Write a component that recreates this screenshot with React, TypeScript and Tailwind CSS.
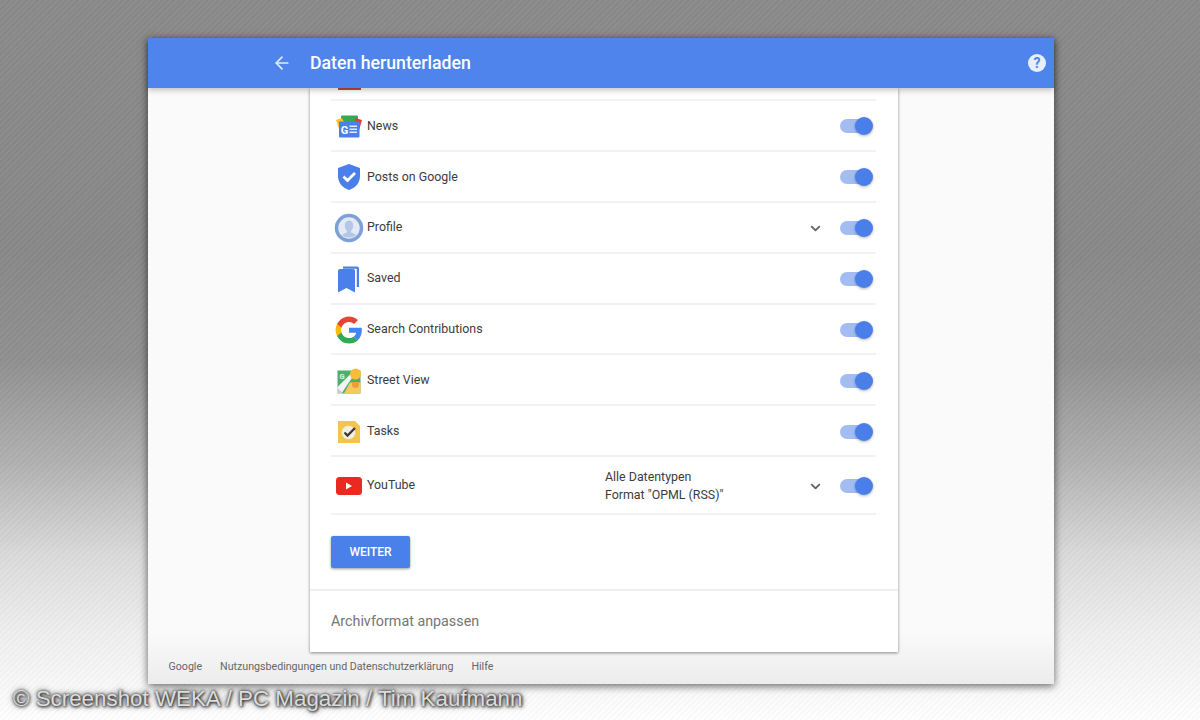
import { ArrowLeft, ChevronDown } from "lucide-react";
import type { ReactNode } from "react";

function RedStub() {
  return <div className="h-[2px] w-[23px] bg-[#c5453f]" />;
}

function NewsIcon() {
  return (
    <svg width="26" height="23" viewBox="0 0 26 23">
      <path d="M6 0.500h15a1 1 0 0 1 1 1V7H5V1.500a1 1 0 0 1 1-1z" fill="#34a853" />
      <path d="M0 5l6-2 3.500 7-6 5z" fill="#fbc02d" />
      <path d="M19.500 3l6.500 2-3 10.500-6-4z" fill="#d9423a" />
      <rect x="3" y="6.500" width="20.500" height="16" rx="1" fill="#4a80ea" />
      <text x="4.700" y="18.500" fontFamily="Roboto, sans-serif" fontWeight="700" fontSize="11" fill="#fff">
        G
      </text>
      <path d="M13.500 10.500h7.500v1.600h-7.500zM13.500 13.500h7.500v1.600h-7.500zM13.500 16.500h7.500v1.600h-7.500z" fill="#dfe9fc" />
    </svg>
  );
}

function ShieldIcon() {
  return (
    <svg width="24" height="28" viewBox="0 0 24 28">
      <path d="M12 1 23 5v8c0 7-4.700 12-11 14C5.700 25 1 20 1 13V5z" fill="#4a80ea" />
      <path d="M6.500 13.500l4 4 7.500-7.500" fill="none" stroke="#fff" strokeWidth="2.800" />
    </svg>
  );
}

function ProfileIcon() {
  return (
    <svg width="30" height="30" viewBox="0 0 30 30">
      <circle cx="15" cy="15" r="12.500" fill="#e4eaf4" stroke="#7ea0d8" strokeWidth="3.500" />
      <path
        d="M15 7.500c2.800 0 4.200 2.200 4.200 5 0 2.200-.9 4-2 5.100v2c2 .8 3.800 1.400 5 2.600A12 12 0 0 1 7.800 22.200c1.200-1.200 3-1.800 5-2.600v-2c-1.100-1.100-2-2.900-2-5.100 0-2.800 1.400-5 4.200-5z"
        fill="#b3c7e6"
      />
    </svg>
  );
}

function SavedIcon() {
  return (
    <svg width="24" height="27" viewBox="0 0 24 27">
      <path d="M6 0.500h14a2 2 0 0 1 2 2V21h-2.200V2.800H6z" fill="#4a80ea" />
      <path d="M1 5a2 2 0 0 1 2-2h13a2 2 0 0 1 2 2v21.500l-8.500-4.500L1 26.500z" fill="#4a80ea" />
    </svg>
  );
}

function GoogleIcon() {
  return (
    <svg width="28" height="28" viewBox="0 0 48 48">
      <path fill="#4285f4" d="M46 24.500c0-1.600-.1-3.100-.4-4.500H24v8.700h12.400a10.600 10.600 0 0 1-4.600 7l7.400 5.700C43.500 37.400 46 31.500 46 24.500z" />
      <path fill="#34a853" d="M24 47c6.200 0 11.400-2 15.200-5.600l-7.400-5.700c-2 1.400-4.700 2.200-7.800 2.200-6 0-11-4-12.800-9.500H3.500v5.900A23 23 0 0 0 24 47z" />
      <path fill="#fbbc05" d="M11.200 28.400a13.800 13.800 0 0 1 0-8.800v-5.900H3.500a23 23 0 0 0 0 20.600z" />
      <path fill="#ea4335" d="M24 10.100c3.400 0 6.400 1.200 8.800 3.400l6.600-6.600A23 23 0 0 0 3.500 13.700l7.700 5.900C13 14.100 18 10.100 24 10.100z" />
    </svg>
  );
}

function StreetViewIcon() {
  return (
    <svg width="26" height="26" viewBox="0 0 26 26">
      <rect x="1.500" y="2.500" width="23" height="23" fill="#4caf6a" />
      <path d="M1.500 19 18 2.500h3L5.500 25.500h-4z" fill="#f2f2f2" />
      <path d="M1.500 25.500V20l6 5.500z" fill="#c9ccd0" />
      <path d="M14 14.500h10.500v11H8z" fill="#f5c95f" />
      <text x="3.500" y="10.500" fontFamily="Roboto, sans-serif" fontWeight="700" fontSize="7.500" fill="#e9f6ec">
        G
      </text>
      <circle cx="19.500" cy="6" r="5.500" fill="#f9bd3a" />
      <path d="M16 14h7v2.500a3.500 3.500 0 0 1-7 0z" fill="#ef9d37" />
    </svg>
  );
}

function TasksIcon() {
  return (
    <svg width="24" height="24" viewBox="0 0 24 24">
      <path d="M1 1h17l5 5v17H1z" fill="#f4c451" />
      <circle cx="11.500" cy="12.500" r="6.800" fill="#f3efe2" />
      <path d="M7.500 12.500l3 3 7.500-7.500" fill="none" stroke="#3a3a3a" strokeWidth="2.300" />
    </svg>
  );
}

function YoutubeIcon() {
  return (
    <svg width="26" height="18" viewBox="0 0 26 18">
      <rect width="26" height="18" rx="3.500" fill="#ea2a20" />
      <path d="M10 5.500v7l6-3.500z" fill="#fff" />
    </svg>
  );
}

function Toggle() {
  return (
    <div className="relative mt-[2px] h-[14px] w-[32px] rounded-full bg-[#a3bdf3]">
      <div className="absolute right-[-1px] top-[-2px] h-[18px] w-[18px] rounded-full bg-[#4a7fe9] shadow-[0_1px_3px_rgba(0,0,0,0.3)]" />
    </div>
  );
}

type RowProps = {
  icon: ReactNode;
  label: string;
  detail?: ReactNode;
  expandable?: boolean;
  last?: boolean;
};

function Row({ icon, label, detail, expandable, last }: RowProps) {
  return (
    <div className={`flex items-center border-b-2 border-[#f2f2f2] pr-[4px] ${last ? "h-[58px]" : "h-[50.900px]"}`}>
      <div className="mt-[2px] flex w-[36px] justify-center pr-[1px]">{icon}</div>
      <div className="mt-[1px] w-[238px] text-[12.400px] text-[#3c3c3c]">{label}</div>
      <div className="mt-[1px] flex-1 text-[12.400px] leading-[18px] text-[#3c3c3c]">{detail}</div>
      {expandable && <ChevronDown className="mr-[17.500px] mt-[2px] h-[15px] w-[15px] text-[#666]" strokeWidth={3} />}
      <Toggle />
    </div>
  );
}

export default function App() {
  return (
    <div className="relative h-[720px] w-[1200px] overflow-hidden bg-[linear-gradient(to_bottom,#8a8a8a_0%,#888888_35%,#909090_50%,#b0b0b0_64%,#dadada_77%,#efefef_88%,#ffffff_100%)] pl-[148px] pt-[38px] font-['Roboto',sans-serif]">
      <div className="pointer-events-none absolute inset-0 bg-[repeating-linear-gradient(135deg,rgba(255,255,255,0.03)_0px,rgba(255,255,255,0.03)_2px,rgba(0,0,0,0.02)_2px,rgba(0,0,0,0.02)_4px)]" />
      <div className="relative flex h-[646px] w-[906px] flex-col bg-[linear-gradient(to_bottom,#fafafa_92%,#ececec_100%)] shadow-[0_2px_8px_rgba(0,0,0,0.6)]">
        <header className="relative z-10 flex h-[50px] shrink-0 items-center bg-[#4e84ec] pl-[124px] pr-[8px] shadow-[0_2px_6px_rgba(0,0,0,0.25)]">
          <ArrowLeft className="h-[20px] w-[20px] text-[#e3ecfc]" strokeWidth={2} />
          <h1 className="ml-[18px] mt-[1px] flex-1 text-[17.700px] font-medium text-white">Daten herunterladen</h1>
          <div className="flex h-[18px] w-[18px] items-center justify-center rounded-full bg-[#e8effc] text-[14px] font-bold text-[#4e84ec]">
            ?
          </div>
        </header>
        <main className="flex-1">
          <div className="ml-[162px] w-[588px] bg-white shadow-[0_1px_3px_rgba(0,0,0,0.45)]">
            <div className="pb-[21px] pl-[21px] pr-[22px]">
              <div className="h-[13px] border-b-2 border-[#f2f2f2] pl-[7px]">
                <RedStub />
              </div>
              <Row icon={<NewsIcon />} label="News" />
              <Row icon={<ShieldIcon />} label="Posts on Google" />
              <Row icon={<ProfileIcon />} label="Profile" expandable />
              <Row icon={<SavedIcon />} label="Saved" />
              <Row icon={<GoogleIcon />} label="Search Contributions" />
              <Row icon={<StreetViewIcon />} label="Street View" />
              <Row icon={<TasksIcon />} label="Tasks" />
              <Row
                icon={<YoutubeIcon />}
                label="YouTube"
                expandable
                last
                detail={
                  <>
                    <div>Alle Datentypen</div>
                    <div>Format "OPML (RSS)"</div>
                  </>
                }
              />
              <button className="mt-[21px] h-[32px] w-[79px] rounded-[2px] bg-[#4a80ea] text-[12px] font-medium text-white shadow-[0_1px_3px_rgba(0,0,0,0.4)]">
                WEITER
              </button>
            </div>
            <div className="flex h-[63px] items-center border-t-2 border-[#eeeeee] pl-[21px] text-[14.300px] text-[#757575]">
              Archivformat anpassen
            </div>
          </div>
        </main>
        <footer className="flex h-[31px] items-start gap-[18px] pl-[20.500px] pt-[6px] text-[10.650px] text-[#666]">
          <span>Google</span>
          <span>Nutzungsbedingungen und Datenschutzerklärung</span>
          <span>Hilfe</span>
        </footer>
      </div>
      <div className="absolute left-[13px] top-[686px] font-['Liberation_Sans',sans-serif] text-[22.350px] leading-[26px] text-[#dcdcdc] [text-shadow:0_0_3px_#333,0_0_6px_#333,1px_1px_3px_#333]">
        © Screenshot WEKA / PC Magazin / Tim Kaufmann
      </div>
    </div>
  );
}
